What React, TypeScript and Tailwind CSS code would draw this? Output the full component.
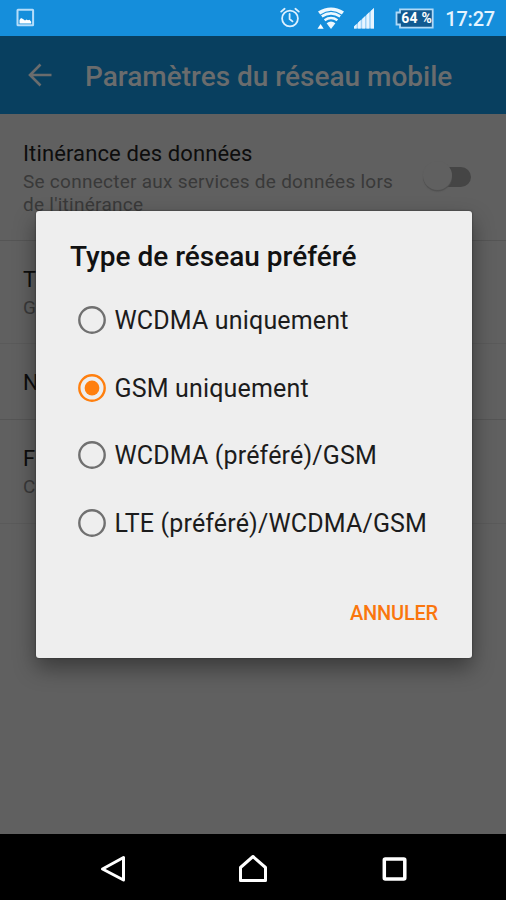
import { useState } from "react";

const options = [
  "WCDMA uniquement",
  "GSM uniquement",
  "WCDMA (préféré)/GSM",
  "LTE (préféré)/WCDMA/GSM",
];

function StatusBar() {
  return (
    <div className="flex h-9 shrink-0 items-center bg-[#158edb] pl-4 pr-[11px] text-[#e4f4ff]">
      <svg width="20" height="20" viewBox="0 0 20 20" className="mr-auto">
        <rect x="1.5" y="1.7" width="15.6" height="15.6" rx="0.5" fill="none" stroke="#b5ddfa" strokeWidth="2" />
        <path d="M3.5 15.5V12L5 10l2 1 2 1.5 1.5-1 1.500.8 1.500-.5 1.700 2v1.700z" fill="#fff" />
      </svg>
      <svg width="20" height="22" viewBox="0 0 20 22" fill="none" stroke="#dcf0ff" strokeWidth="1.8" strokeLinecap="round">
        <circle cx="10" cy="11.5" r="7.9" />
        <path d="M9.6 7v5l2.900 2.400M1.200 4.600 4.600 1.800M18.800 4.600 15.400 1.800" />
      </svg>
      <svg width="28" height="24" viewBox="0 0 28 24" className="ml-[17px]" fill="none" stroke="#edf8ff">
        <path d="M1 5.500Q14-2.500 27 5.500L24.800 8.500Q14 1.200 3.200 8.500z" fill="#edf8ff" stroke="none" />
        <path d="M4.800 10.400Q14 4.400 23.200 10.400" strokeWidth="2.6" />
        <path d="M7.600 14.200Q14 9.800 20.400 14.200" strokeWidth="2.6" />
        <path d="M9.600 17.200Q14 14 18.400 17.200L14 23z" fill="#edf8ff" stroke="none" />
        <path d="M.5 22.800 3.600 18l3.100 4.800z" fill="#fff" stroke="none" />
      </svg>
      <svg width="22" height="22" viewBox="0 0 22 22" className="ml-[8px]">
        <path d="M1 21.500v-2L21 1v20.500z" fill="#9fd2f7" />
        <path d="M1 21.500v-2L3.600 17v4.500zM5 21.500v-5.700L7.700 13v8.500zM9.200 21.500v-9.600L12 9.200v12.300zM13.500 21.500V8l2.700-2.700v16.200zM17.800 21.500V4L21 1v20.500z" fill="#e8f5ff" />
      </svg>
      <div className="relative ml-[20px] h-[21px] w-[39px]">
        <svg width="39" height="21" viewBox="0 0 39 21" className="absolute inset-0">
          <path d="M5 1.300h32.700v18.400H5v-3.200H1.500v-12H5z" fill="#115a91" stroke="#b0d9f7" strokeWidth="1.800" />
        </svg>
        <span className="absolute left-[6px] top-[2px] whitespace-nowrap text-[14px] font-bold leading-[17px] tracking-[0.2px] text-white">64 %</span>
      </div>
      <span className="ml-[11px] pt-[2px] text-[20px] font-medium leading-6 tracking-[-0.2px]">17:27</span>
    </div>
  );
}

function Header() {
  return (
    <header className="flex h-[78px] shrink-0 items-center bg-[#083f5f] pl-7 text-[#6a6c6d]">
      <svg width="24" height="24" viewBox="0 0 24 24" fill="none" stroke="currentColor" strokeWidth="2.6">
        <path d="M23.500 12H2.500M12.500 1.500 2 12l10.500 10.500" />
      </svg>
      <h1 className="ml-[33px] whitespace-nowrap pt-[3px] text-[28px] font-medium">Paramètres du réseau mobile</h1>
    </header>
  );
}

function Settings() {
  return (
    <main className="flex-1 bg-[#606060] text-[#0d0d0d]">
      <div className="flex h-[127px] border-b border-[#555] pl-[23px] pt-[26px]">
        <div className="w-[385px]">
          <div className="text-[22px] leading-[28px] tracking-[0.12px]">Itinérance des données</div>
          <div className="whitespace-nowrap pt-[2px] text-[19px] leading-[23px] tracking-[0.26px] text-[#393939]">
            Se connecter aux services de données lors
            <br />
            de l'itinérance
          </div>
        </div>
        <div className="relative mt-[27px] ml-[15px] h-5 w-[48px] rounded-full bg-linear-to-r from-[#606060] from-50% to-[#454545] to-50%">
          <div className="absolute -top-[6px] left-0 size-[29px] rounded-full bg-[#606060] shadow-[0_1.5px_1px_#505050]" />
        </div>
      </div>
      <div className="h-[103px] border-b border-[#5a5a5a] pl-[23px] pt-[25px]">
        <div className="text-[22px] leading-[28px]">T</div>
        <div className="pt-[2px] text-[19px] leading-[23px] text-[#393939]">G</div>
      </div>
      <div className="h-[76px] border-b border-[#555] pl-[23px] pt-[25px] text-[22px] leading-[28px]">N</div>
      <div className="h-[104px] border-b border-[#5a5a5a] pl-[23px] pt-[25px]">
        <div className="text-[22px] leading-[28px]">F</div>
        <div className="pt-[2px] text-[19px] leading-[23px] text-[#393939]">C</div>
      </div>
    </main>
  );
}

function NetworkDialog() {
  const [selected, setSelected] = useState(1);

  return (
    <div role="dialog" className="absolute left-9 top-[211px] flex h-[447px] w-[436px] flex-col rounded-[3px] bg-[#eee] shadow-[0_0_2px_#2a2a2a,0_10px_22px_#0006]">
      <h2 className="whitespace-nowrap pl-[34px] pt-[29px] text-[28px] font-medium leading-[34px] text-[#111]">Type de réseau préféré</h2>
      <div className="flex flex-col pl-[42px] pt-[32px]">
        {options.map((label, i) => (
          <button key={label} onClick={() => setSelected(i)} className="flex h-[67.5px] items-start text-left">
            <svg width="28" height="28" viewBox="0 0 28 28" className={selected === i ? "text-[#ff7f0e]" : "text-[#707070]"}>
              <circle cx="14" cy="14" r="12.7" fill="none" stroke="currentColor" strokeWidth="2.4" />
              {selected === i && <circle cx="14" cy="14" r="7.4" fill="currentColor" />}
            </svg>
            <span className="ml-[8.5px] whitespace-nowrap text-[25px] leading-[30px] tracking-[0.16px] text-[#1c1c1c]">{label}</span>
          </button>
        ))}
      </div>
      <button className="absolute bottom-[33px] right-[34px] text-[20px] font-medium leading-6 tracking-[-0.2px] text-[#fa760d]">ANNULER</button>
    </div>
  );
}

function NavBar() {
  return (
    <nav className="h-[66px] shrink-0 bg-black pt-[21px]">
      <div className="flex pl-[100px]">
        <svg width="28" height="30" viewBox="0 0 28 30" fill="none" stroke="#fff" strokeWidth="3" strokeLinejoin="round">
          <path d="M23.500 2.500v22.500L2.500 14z" />
        </svg>
        <svg width="30" height="30" viewBox="0 0 30 30" className="ml-[111px]" fill="none" stroke="#fff" strokeWidth="3" strokeLinejoin="round">
          <path d="M1.500 12.500v13h25v-13L14 1.500z" />
        </svg>
        <svg width="26" height="30" viewBox="0 0 26 30" className="ml-[113px]" fill="none" stroke="#fff" strokeWidth="3.5">
          <rect x="2.300" y="4" width="20.500" height="20" rx="1" />
        </svg>
      </div>
    </nav>
  );
}

export default function App() {
  return (
    <div className="relative flex h-[900px] w-[506px] flex-col overflow-hidden font-['Roboto',sans-serif]">
      <StatusBar />
      <Header />
      <Settings />
      <NavBar />
      <NetworkDialog />
    </div>
  );
}
